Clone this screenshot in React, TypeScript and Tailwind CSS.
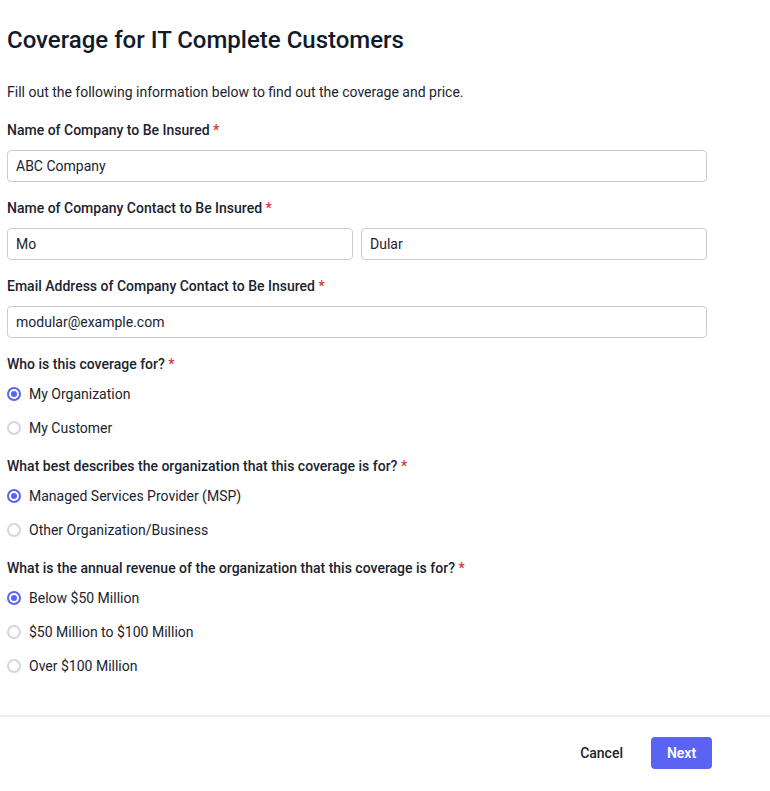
import { useState } from 'react';

type Option = { value: string; label: string };

function Label({ children }: { children: React.ReactNode }) {
  return (
    <div className="h-5 text-sm leading-5 font-medium text-[#1b2330] mb-2.5">
      {children} <span className="text-[#d1343a]">*</span>
    </div>
  );
}

function TextInput({ value, className = '' }: { value: string; className?: string }) {
  return (
    <input
      defaultValue={value}
      className={`h-8 rounded border border-[#c9ccd1] px-2 text-sm text-[#1b2330] outline-none ${className}`}
    />
  );
}

function RadioGroup({ options, selected, onChange }: { options: Option[]; selected: string; onChange: (v: string) => void }) {
  return (
    <div className="flex flex-col">
      {options.map((o) => {
        const on = o.value === selected;
        return (
          <label key={o.value} className="flex items-center h-[34px] cursor-pointer" onClick={() => onChange(o.value)}>
            <span
              className={`flex items-center justify-center w-[14px] h-[14px] rounded-full border-2 ${
                on ? 'border-[#5b63f2]' : 'border-[#d4d6da]'
              }`}
            >
              {on && <span className="w-[6px] h-[6px] rounded-full bg-[#5b63f2]" />}
            </span>
            <span className="ml-2 text-sm text-[#1b2330]">{o.label}</span>
          </label>
        );
      })}
    </div>
  );
}

export default function App() {
  const [coverageFor, setCoverageFor] = useState('org');
  const [orgType, setOrgType] = useState('msp');
  const [revenue, setRevenue] = useState('below50');

  return (
    <div className="w-[770px] h-[791px] bg-white flex flex-col" style={{ fontFamily: 'Roboto, "Liberation Sans", sans-serif' }}>
      <div className="flex-1 px-[7px] pt-6">
        <h1 className="text-2xl leading-8 font-medium text-[#101a2b]">Coverage for IT Complete Customers</h1>
        <p className="mt-[26px] text-sm leading-5 text-[#1b2330]">
          Fill out the following information below to find out the coverage and price.
        </p>

        <div className="w-[700px] mt-[18px]">
          <div className="mb-4">
            <Label>Name of Company to Be Insured</Label>
            <TextInput value="ABC Company" className="w-full" />
          </div>

          <div className="mb-4">
            <Label>Name of Company Contact to Be Insured</Label>
            <div className="flex gap-2">
              <TextInput value="Mo" className="flex-1 min-w-0" />
              <TextInput value="Dular" className="flex-1 min-w-0" />
            </div>
          </div>

          <div className="mb-4">
            <Label>Email Address of Company Contact to Be Insured</Label>
            <TextInput value="modular@example.com" className="w-full" />
          </div>

          <div className="mb-[11px]">
            <div className="h-5 text-sm leading-5 font-medium text-[#1b2330] mb-[3px]">
              Who is this coverage for? <span className="text-[#d1343a]">*</span>
            </div>
            <RadioGroup
              selected={coverageFor}
              onChange={setCoverageFor}
              options={[
                { value: 'org', label: 'My Organization' },
                { value: 'customer', label: 'My Customer' },
              ]}
            />
          </div>

          <div className="mb-[11px]">
            <div className="h-5 text-sm leading-5 font-medium text-[#1b2330] mb-[3px]">
              What best describes the organization that this coverage is for? <span className="text-[#d1343a]">*</span>
            </div>
            <RadioGroup
              selected={orgType}
              onChange={setOrgType}
              options={[
                { value: 'msp', label: 'Managed Services Provider (MSP)' },
                { value: 'other', label: 'Other Organization/Business' },
              ]}
            />
          </div>

          <div>
            <div className="h-5 text-sm leading-5 font-medium text-[#1b2330] mb-[3px]">
              What is the annual revenue of the organization that this coverage is for? <span className="text-[#d1343a]">*</span>
            </div>
            <RadioGroup
              selected={revenue}
              onChange={setRevenue}
              options={[
                { value: 'below50', label: 'Below $50 Million' },
                { value: '50to100', label: '$50 Million to $100 Million' },
                { value: 'over100', label: 'Over $100 Million' },
              ]}
            />
          </div>
        </div>
      </div>

      {/* Footer */}
      <div className="border-t-2 border-[#ececec] h-[76px] flex items-start justify-end pt-5 pr-[58px]">
        <button className="h-8 px-4 text-sm font-medium text-[#1b2330] mr-3">Cancel</button>
        <button className="h-8 w-[61px] rounded bg-[#5b63f2] text-sm font-semibold text-white">Next</button>
      </div>
    </div>
  );
}
